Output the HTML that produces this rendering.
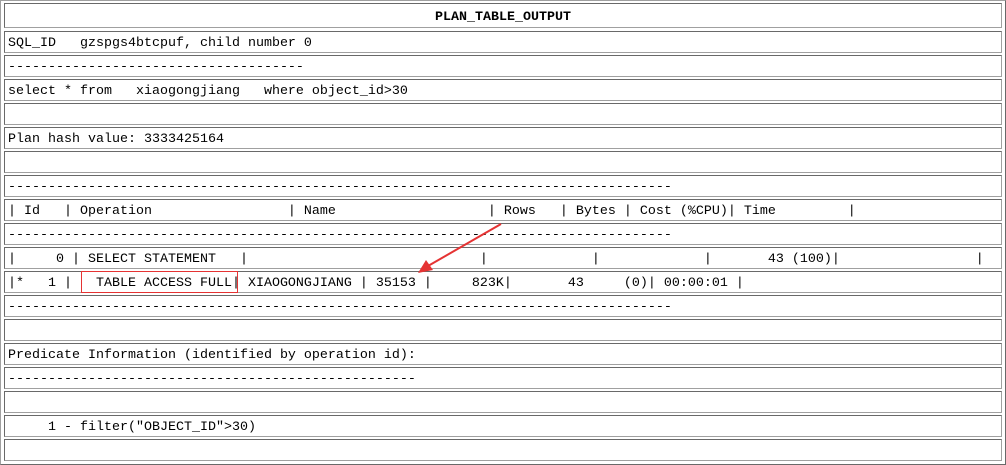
<!DOCTYPE html>
<html><head><meta charset="utf-8"><style>
html,body{margin:0;padding:0;background:#fff;}
body{width:1006px;height:465px;position:relative;overflow:hidden;}
#outer{position:absolute;left:0;top:0;width:1004px;height:463px;border:1px solid;border-color:#a0a0a0 #696969 #696969 #a0a0a0;}
.c{position:absolute;left:4px;height:18px;padding-top:2px;border:1px solid;border-color:#696969 #a0a0a0 #a0a0a0 #696969;
font-family:"Liberation Mono",monospace;font-size:13.33px;line-height:20px;white-space:pre;color:#000;padding-left:3px;box-sizing:content-box;width:993px;}
.t{text-align:center;font-weight:bold;padding-left:0;width:996px;}
</style></head><body>
<div id="outer"></div>
<div class="c t" style="top:3px;height:21px;line-height:23px;">PLAN_TABLE_OUTPUT</div>
<div class="c" style="top:31px">SQL_ID   gzspgs4btcpuf, child number 0</div>
<div class="c" style="top:55px">-------------------------------------</div>
<div class="c" style="top:79px">select * from   xiaogongjiang   where object_id&gt;30</div>
<div class="c" style="top:103px"></div>
<div class="c" style="top:127px">Plan hash value: 3333425164</div>
<div class="c" style="top:151px"></div>
<div class="c" style="top:175px">-----------------------------------------------------------------------------------</div>
<div class="c" style="top:199px">| Id   | Operation                 | Name                   | Rows   | Bytes | Cost (%CPU)| Time         |</div>
<div class="c" style="top:223px">-----------------------------------------------------------------------------------</div>
<div class="c" style="top:247px">|     0 | SELECT STATEMENT   |                             |             |             |       43 (100)|                 |</div>
<div class="c" style="top:271px">|*   1 |   TABLE ACCESS FULL| XIAOGONGJIANG | 35153 |     823K|       43     (0)| 00:00:01 |</div>
<div class="c" style="top:295px">-----------------------------------------------------------------------------------</div>
<div class="c" style="top:319px"></div>
<div class="c" style="top:343px">Predicate Information (identified by operation id):</div>
<div class="c" style="top:367px">---------------------------------------------------</div>
<div class="c" style="top:391px"></div>
<div class="c" style="top:415px">     1 - filter("OBJECT_ID"&gt;30)</div>
<div class="c" style="top:439px"></div>
<div style="position:absolute;left:81px;top:271px;width:155px;height:20px;border:1px solid #e53333;"></div>
<svg style="position:absolute;left:0;top:0" width="1006" height="465">
<line x1="501" y1="224" x2="428" y2="266" stroke="#e53333" stroke-width="2"/>
<polygon points="418,273 426,260 433,270" fill="#e53333"/>
</svg>
</body></html>
